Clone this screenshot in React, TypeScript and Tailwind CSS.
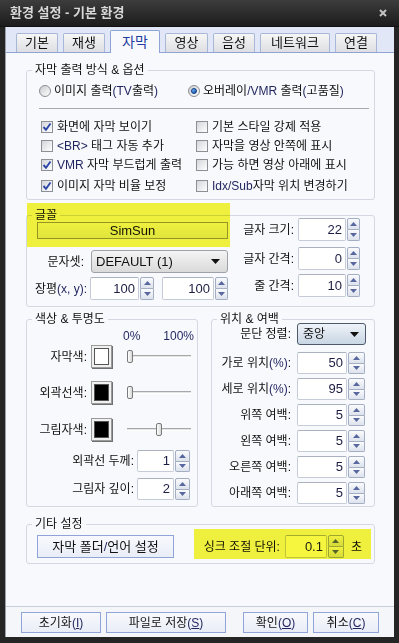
import React from 'react';

const L = ({ children }: { children: React.ReactNode }) => (
  <span className="text-[#1f245e]">{children}</span>
);

const Check = ({ checked, children }: { checked?: boolean; children: React.ReactNode }) => (
  <div className="flex items-center h-[19px]">
    <div className="w-[12px] h-[12px] border border-[#8c8f96] bg-linear-to-br from-[#d4d6da] to-white flex items-center justify-center shrink-0">
      {checked && (
        <svg width="10" height="10" viewBox="0 0 10 10">
          <path d="M1.5 5 L4 7.8 L8.5 1.5" stroke="#2b46a8" strokeWidth="1.9" fill="none" />
        </svg>
      )}
    </div>
    <span className="ml-[4px] whitespace-nowrap">{children}</span>
  </div>
);

const Radio = ({ checked, children }: { checked?: boolean; children: React.ReactNode }) => (
  <div className="flex items-center h-[18px]">
    <div className="w-[12px] h-[12px] rounded-full border border-[#8a8d94] bg-linear-to-br from-[#c9cbcf] to-white flex items-center justify-center shrink-0">
      {checked && <div className="w-[6px] h-[6px] rounded-full bg-linear-to-br from-[#7cc0ff] to-[#0f4fa8] border border-[#0b3a80]" />}
    </div>
    <span className="ml-[3px] whitespace-nowrap">{children}</span>
  </div>
);

const Tri = ({ down }: { down?: boolean }) => (
  <svg width="7" height="4" viewBox="0 0 7 4">
    <path d={down ? 'M0 0 L3.5 4 L7 0Z' : 'M0 4 L3.5 0 L7 4Z'} fill="#58689e" />
  </svg>
);

const Spin = ({ value, iw, sw }: { value: string; iw: string; sw: string }) => (
  <div className="flex h-full gap-px">
    <div className={`flex items-center justify-end pr-[3px] bg-white border border-[#c6ccd7] border-t-[#aab2c0] rounded-[2px] text-[13px] text-[#1a1d40] ${iw}`}>
      {value}
    </div>
    <div className={`flex flex-col ${sw}`}>
      <div className="flex-1 flex items-center justify-center border border-[#a4aec3] rounded-t-[2px] bg-linear-to-b from-[#fafbfd] to-[#dde2ec]">
        <Tri />
      </div>
      <div className="flex-1 flex items-center justify-center border border-t-0 border-[#a4aec3] rounded-b-[2px] bg-linear-to-b from-[#fafbfd] to-[#dde2ec]">
        <Tri down />
      </div>
    </div>
  </div>
);

const Arrow = () => (
  <svg width="9" height="5" viewBox="0 0 9 5">
    <path d="M0 0 L4.5 5 L9 0Z" fill="#111" />
  </svg>
);

const Swatch = ({ color }: { color: string }) => (
  <div className="w-[21px] h-[23px] border border-[#9a9a9a] bg-[#f0f0f0] p-[2px] shadow-[1px_1px_0_#707070]">
    <div className={`w-full h-full border border-[#555] ${color}`} />
  </div>
);

const Slider = ({ pos }: { pos: number }) => (
  <div className="relative w-[64px] h-[13px] flex items-center">
    <div className="w-full h-[3px] border-t border-[#a8a8a8] border-b border-b-white bg-[#e4e4e4]" />
    <div
      className="absolute top-0 h-[13px] w-[6px] rounded-[2px] border border-[#7a7a7a] bg-linear-to-r from-white to-[#d8d8d8]"
      style={{ left: pos }}
    />
  </div>
);

const Group = ({ title, className, children }: { title: string; className: string; children: React.ReactNode }) => (
  <fieldset className={`border border-[#d3d8e2] rounded-[3px] ${className}`}>
    <legend className="ml-[5px] px-[3px] leading-[16px]">{title}</legend>
    {children}
  </fieldset>
);

const Btn = ({ className, children }: { className: string; children: React.ReactNode }) => (
  <div className={`flex items-center justify-center border border-[#8fa4d8] bg-linear-to-b from-[#f8f9fd] to-[#e9edf6] ${className}`}>
    {children}
  </div>
);

const tabs = ['기본', '재생', '자막', '영상', '음성', '네트워크', '연결'];
const tabW = ['w-[42px]', 'w-[42px]', 'w-[50px]', 'w-[43px]', 'w-[42px]', 'w-[70px]', 'w-[42px]'];

export default function App() {
  return (
    <div className="relative w-[399px] h-[643px] bg-[#252525] flex flex-col text-[12px] text-[#111] font-['Liberation_Sans','Noto_Sans_CJK_KR',sans-serif] overflow-hidden">
      {/* title bar */}
      <div className="h-[27px] flex items-center justify-between pl-[10px] pr-[12px] bg-linear-to-b from-[#3d3d3d] to-[#1c1c1c] border-b border-[#111]">
        <span className="text-[13px] font-bold text-[#d8d8d8]">환경 설정 - 기본 환경</span>
        <svg width="8" height="8" viewBox="0 0 8 8">
          <path d="M1 1 L7 7 M7 1 L1 7" stroke="#c4c4c4" strokeWidth="2" />
        </svg>
      </div>

      <div className="flex-1 mx-[5px] mb-[6px] flex flex-col bg-[#e1e7f6] border-l border-[#9aa0aa]">
        {/* tabs */}
        <div className="h-[25px] flex items-end pl-[10px] gap-[5px]">
          {tabs.map((t, i) =>
            i === 2 ? (
              <div
                key={t}
                className={`relative z-10 -mb-px h-[23px] flex items-center justify-center bg-[#f8f9fc] border border-b-0 border-[#8ea4d4] rounded-t-[2px] text-[14px] text-[#1f3d9e] ${tabW[i]}`}
              >
                {t}
              </div>
            ) : (
              <div
                key={t}
                className={`h-[19px] flex items-center justify-center border border-b-0 border-[#a8b7d8] bg-linear-to-b from-[#f6f6f6] to-[#dedfe3] rounded-t-[2px] text-[13px] ${tabW[i]}`}
              >
                {t}
              </div>
            )
          )}
        </div>

        {/* pane */}
        <div className="flex-1 flex flex-col bg-[#f8f9fc] border-t border-[#8ea4d4] pl-[20px] pr-[19px]">
          <Group title="자막 출력 방식 & 옵션" className="mt-[9px] pb-[4px]">
            <div className="grid grid-cols-[149px_1fr] pl-[12px] mt-[4px]">
              <Radio>
                이미지 출력<L>(TV</L>출력<L>)</L>
              </Radio>
              <Radio checked>
                오버레이<L>/VMR</L> 출력<L>(</L>고품질<L>)</L>
              </Radio>
            </div>
            <div className="ml-[12px] mr-[5px] mt-[8px] h-px bg-[#a9a9a9]" />
            <div className="grid grid-cols-[155px_1fr] pl-[14px] mt-[8px]">
              <Check checked>화면에 자막 보이기</Check>
              <Check>기본 스타일 강제 적용</Check>
              <Check>
                <L>&lt;BR&gt;</L> 태그 자동 추가
              </Check>
              <Check>자막을 영상 안쪽에 표시</Check>
              <Check checked>
                <L>VMR</L> 자막 부드럽게 출력
              </Check>
              <Check>가능 하면 영상 아래에 표시</Check>
              <div className="mt-[2px]">
                <Check checked>이미지 자막 비율 보정</Check>
              </div>
              <div className="mt-[2px]">
                <Check>
                  <L>Idx/Sub</L>자막 위치 변경하기
                </Check>
              </div>
            </div>
          </Group>

          <Group title="글꼴" className="mt-[7px] pb-[6px]">
            <div className="flex">
              <div className="w-[201px] flex flex-col">
                <Btn className="ml-[10px] -mt-px h-[17px] border-[#9a9a9a] text-[13px]">SimSun</Btn>
                <div className="flex items-center mt-[11px] h-[23px]">
                  <span className="w-[57px] text-right">문자셋:</span>
                  <div className="ml-[7px] flex-1 h-full flex items-center justify-between pl-[4px] pr-[7px] border border-[#9ea2a8] rounded-[3px] bg-linear-to-b from-[#f4f4f4] to-[#dadada] text-[13px]">
                    DEFAULT (1)
                    <Arrow />
                  </div>
                </div>
                <div className="flex items-center mt-[4px] h-[23px]">
                  <span className="w-[61px] text-right whitespace-nowrap">
                    장평<L>(x, y):</L>
                  </span>
                  <div className="ml-[3px] h-full">
                    <Spin value="100" iw="w-[49px]" sw="w-[14px]" />
                  </div>
                  <div className="ml-[8px] h-full">
                    <Spin value="100" iw="w-[52px]" sw="w-[13px]" />
                  </div>
                </div>
              </div>
              <div className="flex-1 flex flex-col pr-[14px] -mt-[5px]">
                {[
                  ['글자 크기:', '22', 'mt-0'],
                  ['글자 간격:', '0', 'mt-[6px]'],
                  ['줄 간격:', '10', 'mt-[4px]'],
                ].map(([l, v, m]) => (
                  <div key={l} className={`flex items-center h-[23px] ${m}`}>
                    <span className="flex-1 text-right pr-[4px]">{l}</span>
                    <Spin value={v} iw="w-[48px]" sw="w-[13px]" />
                  </div>
                ))}
              </div>
            </div>
          </Group>

          <div className="flex items-start gap-[13px] mt-[4px]">
            <Group title="색상 & 투명도" className="w-[172px] pb-[6px]">
              <div className="flex h-[14px] items-center mt-[2px]">
                <span className="ml-[96px]">
                  <L>0%</L>
                </span>
                <span className="ml-[23px]">
                  <L>100%</L>
                </span>
              </div>
              {[
                ['자막색:', 'bg-white', 0, 'mt-[2px]'],
                ['외곽선색:', 'bg-black', 0, 'mt-[13px]'],
                ['그림자색:', 'bg-black', 29, 'mt-[14px]'],
              ].map(([l, c, p, m]) => (
                <div key={l as string} className={`flex items-center h-[23px] ${m}`}>
                  <span className="w-[60px] text-right">{l}</span>
                  <div className="ml-[4px]">
                    <Swatch color={c as string} />
                  </div>
                  <div className="ml-[15px]">
                    <Slider pos={p as number} />
                  </div>
                </div>
              ))}
              {[
                ['외곽선 두께:', '1', 'mt-[9px]'],
                ['그림자 깊이:', '2', 'mt-[6px]'],
              ].map(([l, v, m]) => (
                <div key={l} className={`flex items-center h-[22px] ${m}`}>
                  <span className="w-[107px] text-right">{l}</span>
                  <div className="ml-[3px] h-full">
                    <Spin value={v} iw="w-[37px]" sw="w-[15px]" />
                  </div>
                </div>
              ))}
            </Group>

            <Group title="위치 & 여백" className="flex-1 pb-[2px]">
              <div className="flex items-center h-[22px] -mt-[4px]">
                <span className="w-[79px] text-right">문단 정렬:</span>
                <div className="ml-[6px] w-[69px] h-full flex items-center justify-between pl-[5px] pr-[6px] border border-[#4e5a6c] rounded-[3px] bg-linear-to-b from-[#eef3f8] to-[#c9d6e4]">
                  중앙
                  <Arrow />
                </div>
              </div>
              {[
                ['가로 위치', '50', true, 'mt-[7px]'],
                ['세로 위치', '95', true, 'mt-[4px]'],
                ['위쪽 여백', '5', false, 'mt-[4px]'],
                ['왼쪽 여백', '5', false, 'mt-[4px]'],
                ['오른쪽 여백', '5', false, 'mt-[4px]'],
                ['아래쪽 여백', '5', false, 'mt-[4px]'],
              ].map(([l, v, pct, m]) => (
                <div key={l as string} className={`flex items-center h-[22px] ${m}`}>
                  <span className="w-[79px] text-right whitespace-nowrap">
                    {l}
                    {pct ? <L>(%)</L> : null}:
                  </span>
                  <div className="ml-[6px] h-full">
                    <Spin value={v as string} iw="w-[50px]" sw="w-[17px]" />
                  </div>
                </div>
              ))}
            </Group>
          </div>

          <Group title="기타 설정" className="mt-[9px] pb-[5px]">
            <div className="flex items-center mt-[3px] h-[23px]">
              <Btn className="ml-[10px] w-[137px] h-full border-[#8a8a8a] bg-linear-to-b from-[#f7f7f7] to-[#dcdcdc] text-[13px]">
                자막 폴더<L>/</L>언어 설정
              </Btn>
              <span className="ml-auto">싱크 조절 단위:</span>
              <div className="ml-[5px] h-full">
                <Spin value="0.1" iw="w-[42px]" sw="w-[16px]" />
              </div>
              <span className="ml-[7px] mr-[12px]">초</span>
            </div>
          </Group>
        </div>

        {/* bottom bar */}
        <div className="h-[31px] flex items-start pt-[5px] pl-[15px] pr-[15px] bg-[#f4f6fa] border-t border-[#c6cedd]">
          <Btn className="w-[80px] h-[21px]">
            초기화<L>(<u>I</u>)</L>
          </Btn>
          <Btn className="ml-[5px] w-[120px] h-[21px]">
            파일로 저장<L>(<u>S</u>)</L>
          </Btn>
          <Btn className="ml-auto w-[65px] h-[21px]">
            확인<L>(<u>O</u>)</L>
          </Btn>
          <Btn className="ml-[5px] w-[66px] h-[21px]">
            취소<L>(<u>C</u>)</L>
          </Btn>
        </div>
      </div>

      {/* highlighter marks */}
      <div className="absolute left-[27px] top-[203px] w-[203px] h-[44px] bg-[#f6f63e] mix-blend-multiply" />
      <div className="absolute left-[194px] top-[529px] w-[177px] h-[30px] bg-[#f6f63e] mix-blend-multiply" />
    </div>
  );
}
